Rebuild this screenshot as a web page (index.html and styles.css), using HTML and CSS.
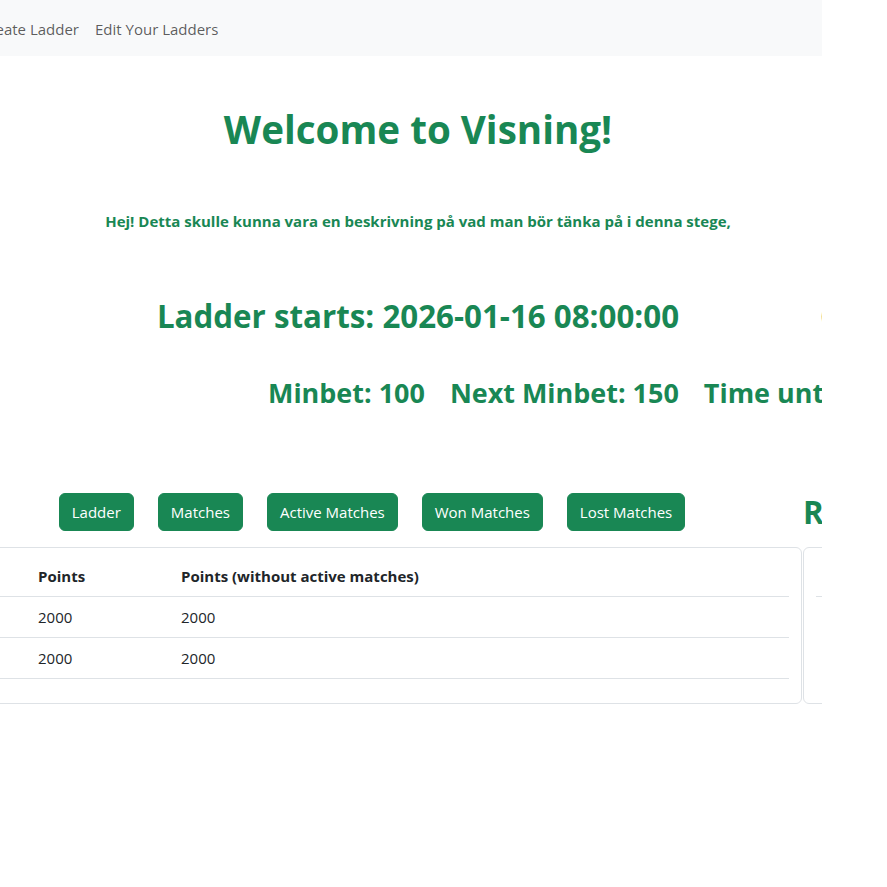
FILE: index.html
```html
<!DOCTYPE html>
<html lang="sv">
<head>
    <meta charset="UTF-8">
    <meta name="viewport" content="width=device-width, initial-scale=1.0">
    <title>Visning</title>
    <link rel="stylesheet" href="styles.css">
</head>
<body>
<div class="page">
    <nav class="navbar">
        <div class="nav-lead">
            <a class="nav-link" href="#">Create Ladder</a>
        </div>
        <a class="nav-link edit" href="#">Edit Your Ladders</a>
    </nav>

    <main class="content">
        <h1 class="title">Welcome to Visning!</h1>
        <p class="desc">Hej! Detta skulle kunna vara en beskrivning på vad man bör tänka på i denna stege,</p>

        <div class="dates">
            <h2 class="starts">Ladder starts: 2026-01-16 08:00:00</h2>
            <h2 class="countdown">Countdown: 3 days</h2>
        </div>

        <h3 class="minbet">
            <span>Minbet: 100</span>
            <span>Next Minbet: 150</span>
            <span>Time until next minbet: 2 days</span>
        </h3>

        <div class="board">
            <div class="tabs">
                <button class="btn">Ladder</button>
                <button class="btn">Matches</button>
                <button class="btn">Active Matches</button>
                <button class="btn">Won Matches</button>
                <button class="btn">Lost Matches</button>
            </div>
            <h2 class="side-title">Rules</h2>

            <div class="card">
                <table class="table">
                    <thead>
                        <tr>
                            <th class="col-rank">#</th>
                            <th class="col-points">Points</th>
                            <th>Points (without active matches)</th>
                        </tr>
                    </thead>
                    <tbody>
                        <tr><td>1</td><td>2000</td><td>2000</td></tr>
                        <tr><td>2</td><td>2000</td><td>2000</td></tr>
                    </tbody>
                </table>
            </div>

            <div class="card side">
                <table class="table">
                    <thead>
                        <tr><th>Rule</th></tr>
                    </thead>
                </table>
            </div>
        </div>
    </main>
</div>
</body>
</html>
```

FILE: styles.css
```css
*{
    box-sizing: border-box;
}
body{
    margin: 0;
    background-color: #fff;
    color: #212529;
    font-family: "Open Sans", "Noto Sans", sans-serif;
}
.page{
    width: 822px;
    overflow: hidden;
}

/* navbar */
.navbar{
    height: 56px;
    padding-top: 2px;
    background-color: #f8f9fa;
    display: flex;
    align-items: center;
}
.nav-lead{
    width: 79px;
    flex-shrink: 0;
    display: flex;
    justify-content: flex-end;
}
.nav-link{
    color: rgba(0, 0, 0, 0.65);
    text-decoration: none;
    font-size: 15px;
    white-space: nowrap;
}
.nav-link.edit{
    margin-left: 16px;
}

/* header texts */
.content{
    width: 836px;
}
.title, .desc, .dates h2, .minbet, .side-title{
    color: #198754;
    font-weight: 700;
}
.title{
    margin: 49px 0 0;
    font-size: 38.6px;
    line-height: 48px;
    text-align: center;
}
.desc{
    margin: 56px 0 0;
    font-size: 15px;
    line-height: 24px;
    text-align: center;
}
.dates{
    display: grid;
    grid-template-columns: 820px auto;
    margin-top: 64px;
}
.dates h2{
    margin: 0;
    font-size: 31.3px;
    line-height: 38px;
    white-space: nowrap;
}
.starts{
    padding-left: 16px;
    text-align: center;
}
.minbet{
    display: flex;
    gap: 25px;
    margin: 41px 0 0;
    padding-left: 268px;
    font-size: 26.95px;
    line-height: 34px;
    white-space: nowrap;
}

/* tabs + tables */
.board{
    display: grid;
    grid-template-columns: 860px 300px;
    column-gap: 1px;
    row-gap: 16px;
    margin-top: 83px;
    margin-left: -58px;
}
.tabs{
    display: flex;
    justify-content: center;
    gap: 24px;
}
.btn{
    font-family: inherit;
    font-size: 15px;
    line-height: 24px;
    padding: 6px 12px;
    color: #fff;
    background-color: #198754;
    border: 1px solid #198754;
    border-radius: 6px;
    cursor: pointer;
}
.side-title{
    margin: 0;
    font-size: 31.3px;
    line-height: 38px;
    white-space: nowrap;
}
.card{
    border: 1px solid #dee2e6;
    border-radius: 6px;
    padding: 8px 12px;
    background-color: #fff;
}
.table{
    width: 100%;
    border-collapse: collapse;
    table-layout: fixed;
    margin-bottom: 16px;
    font-size: 15px;
    line-height: 24px;
}
.table th, .table td{
    padding: 8px;
    text-align: left;
    border-bottom: 1px solid #dee2e6;
    white-space: nowrap;
}
.table th{
    font-weight: 700;
}
.col-rank{
    width: 75px;
}
.col-points{
    width: 143px;
}
.card.side .table th{
    padding-left: 20px;
}
```
